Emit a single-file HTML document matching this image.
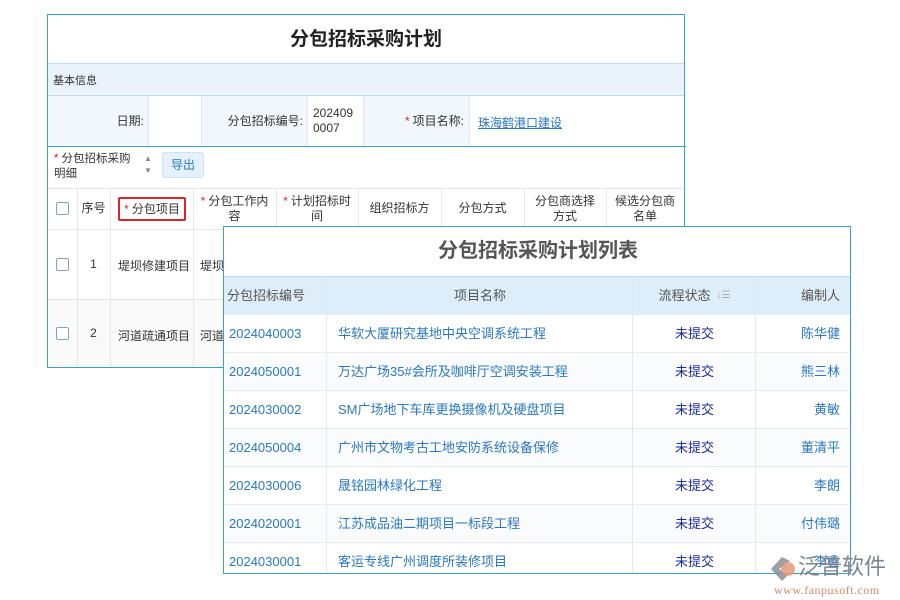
<!DOCTYPE html>
<html><head><meta charset="utf-8"><style>
*{box-sizing:border-box;margin:0;padding:0}
body{width:900px;height:600px;background:#fff;position:relative;overflow:hidden;font-family:"Liberation Sans","Noto Sans CJK SC",sans-serif;font-size:12px;color:#333}
.abs{position:absolute}
.p1{left:47px;top:14px;width:638px;height:354px;border:1px solid #3aa3c0;background:#fff}
.cell{position:absolute;display:flex;align-items:center;justify-content:center;text-align:center;line-height:15px}
.vl{position:absolute;width:1px;background:#e3e6ea}
.hl{position:absolute;height:1px;background:#e3e6ea}
.star{color:#d9262b;margin-right:3px}
.cb{width:13px;height:13px;border:1px solid #8aa2b6;border-radius:2px;background:#fff}
.p2{left:223px;top:226px;width:628px;height:348px;border:1px solid #3aa3c0;background:#fff;overflow:hidden}
.blue{color:#2a78c0}
.st{color:#1a2a9a}
</style></head><body>
<div class="abs p1">
  <div class="cell" style="left:0;top:0;width:636px;height:48px;font-size:19px;font-weight:bold;color:#222">分包招标采购计划</div>
  <div class="hl" style="left:0;top:48px;width:636px;background:#c6dbe9"></div>
  <div class="abs" style="left:0;top:49px;width:636px;height:31px;background:#eaf3fb;padding:8px 5px;font-size:11px">基本信息</div>
  <div class="hl" style="left:0;top:80px;width:636px;background:#c6dbe9"></div>
  <div class="abs" style="left:0;top:81px;width:100px;height:50px;background:#f1f7fc"></div>
  <div class="cell" style="left:0;top:81px;width:96px;height:50px;justify-content:flex-end">日期:</div>
  <div class="vl" style="left:100px;top:81px;height:50px"></div>
  <div class="vl" style="left:153px;top:81px;height:50px"></div>
  <div class="abs" style="left:154px;top:81px;width:105px;height:50px;background:#f1f7fc"></div>
  <div class="cell" style="left:154px;top:81px;width:101px;height:50px;justify-content:flex-end">分包招标编号:</div>
  <div class="vl" style="left:259px;top:81px;height:50px"></div>
  <div class="abs" style="left:265px;top:91px;line-height:15px">202409<br>0007</div>
  <div class="vl" style="left:315px;top:81px;height:50px"></div>
  <div class="abs" style="left:316px;top:81px;width:105px;height:50px;background:#f1f7fc"></div>
  <div class="cell" style="left:316px;top:81px;width:100px;height:50px;justify-content:flex-end"><span class="star">*</span>项目名称:</div>
  <div class="vl" style="left:421px;top:81px;height:50px"></div>
  <div class="abs" style="left:430px;top:99px;color:#2a78c0;text-decoration:underline">珠海鹤港口建设</div>
  <div class="hl" style="left:0;top:131px;width:638px;height:1px;background:#3aa3c0"></div>
  <div class="abs" style="left:6px;top:137px;line-height:15px;font-size:11.5px"><span class="star">*</span>分包招标采购<br>明细</div>
  <div class="abs" style="left:96px;top:138px;font-size:8px;color:#888;line-height:12px">▲<br>▼</div>
  <div class="cell" style="left:114px;top:137px;width:42px;height:26px;background:#e4f0fb;border:1px solid #cfe2f3;border-radius:3px;color:#2a78c0">导出</div>
  <div class="hl" style="left:0;top:173px;width:636px"></div>
  <div class="hl" style="left:0;top:214px;width:636px"></div>
  <div class="hl" style="left:0;top:284px;width:636px"></div>
  <div class="abs" style="left:0;top:285px;width:636px;height:67px;background:#fafafa"></div>
  <div class="vl" style="left:29px;top:173px;height:179px"></div>
  <div class="vl" style="left:62px;top:173px;height:179px"></div>
  <div class="vl" style="left:145px;top:173px;height:179px"></div>
  <div class="vl" style="left:228px;top:173px;height:41px"></div>
  <div class="vl" style="left:310px;top:173px;height:41px"></div>
  <div class="vl" style="left:393px;top:173px;height:41px"></div>
  <div class="vl" style="left:476px;top:173px;height:41px"></div>
  <div class="vl" style="left:558px;top:173px;height:41px"></div>
  <div class="cell" style="left:0;top:173px;width:29px;height:41px"><div class="cb"></div></div>
  <div class="cell" style="left:29px;top:173px;width:33px;height:41px">序号</div>
  <div class="cell" style="left:70px;top:182px;width:68px;height:24px;border:2px solid #d9262b;border-radius:2px"><span class="star">*</span>分包项目</div>
  <div class="cell" style="left:145px;top:173px;width:83px;height:41px"><span><span class="star">*</span>分包工作内<br>容</span></div>
  <div class="cell" style="left:228px;top:173px;width:82px;height:41px"><span><span class="star">*</span>计划招标时<br>间</span></div>
  <div class="cell" style="left:310px;top:173px;width:83px;height:41px">组织招标方</div>
  <div class="cell" style="left:393px;top:173px;width:83px;height:41px">分包方式</div>
  <div class="cell" style="left:476px;top:173px;width:82px;height:41px">分包商选择<br>方式</div>
  <div class="cell" style="left:558px;top:173px;width:78px;height:41px">候选分包商<br>名单</div>
  <div class="cell" style="left:0;top:214px;width:29px;height:70px"><div class="cb"></div></div>
  <div class="cell" style="left:29px;top:214px;width:33px;height:70px">1</div>
  <div class="abs" style="left:70px;top:242px">堤坝修建项目</div>
  <div class="abs" style="left:152px;top:242px">堤坝修</div>
  <div class="cell" style="left:0;top:285px;width:29px;height:67px"><div class="cb"></div></div>
  <div class="cell" style="left:29px;top:285px;width:33px;height:67px">2</div>
  <div class="abs" style="left:70px;top:312px">河道疏通项目</div>
  <div class="abs" style="left:152px;top:312px">河道疏</div>
</div>
<div class="abs p2">
  <div class="cell" style="left:0;top:0;width:628px;height:49px;font-size:20px;font-weight:bold;color:#555">分包招标采购计划列表</div>
  <div class="abs" style="left:0;top:49px;width:628px;height:38px;background:#deedfa;border-top:1px solid #b9d6ec"></div>
  <div class="cell" style="left:3px;top:49px;height:38px;font-size:13px;color:#555">分包招标编号</div>
  <div class="cell" style="left:103px;top:49px;width:306px;height:38px;font-size:13px;color:#555">项目名称</div>
  <div class="cell" style="left:409px;top:49px;width:123px;height:38px;font-size:13px;color:#555">流程状态 <span style="color:#aaa;font-size:10px;margin-left:6px">↓☰</span></div>
  <div class="cell" style="left:532px;top:49px;width:96px;height:38px;font-size:13px;color:#555;justify-content:flex-end;padding-right:12px">编制人</div>
  <div id="rows"></div>
  <div class="vl" style="left:102px;top:49px;height:300px;background:#e3e8ee"></div>
  <div class="vl" style="left:408px;top:49px;height:300px;background:#e3e8ee"></div>
  <div class="vl" style="left:531px;top:49px;height:300px;background:#e3e8ee"></div>
</div>
<script>
var d=[["2024040003","华软大厦研究基地中央空调系统工程","陈华健"],["2024050001","万达广场35#会所及咖啡厅空调安装工程","熊三林"],["2024030002","SM广场地下车库更换摄像机及硬盘项目","黄敏"],["2024050004","广州市文物考古工地安防系统设备保修","董清平"],["2024030006","晟铭园林绿化工程","李朗"],["2024020001","江苏成品油二期项目一标段工程","付伟璐"],["2024030001","客运专线广州调度所装修项目","李鑫"]];
var h="";d.forEach(function(r,i){var t=87+i*38;h+='<div class="abs" style="left:0;top:'+t+'px;width:628px;height:38px;border-top:1px solid #e6ebf0;background:'+(i%2?'#fafbfd':'#fff')+'"></div>'+
'<div class="cell blue" style="left:5px;top:'+t+'px;height:38px;font-size:13px">'+r[0]+'</div>'+
'<div class="cell blue" style="left:114px;top:'+t+'px;height:38px;font-size:13px">'+r[1]+'</div>'+
'<div class="cell st" style="left:409px;top:'+t+'px;width:123px;height:38px;font-size:13px">未提交</div>'+
'<div class="cell blue" style="left:532px;top:'+t+'px;width:96px;height:38px;font-size:13px;justify-content:flex-end;padding-right:12px">'+r[2]+'</div>';});
document.getElementById('rows').innerHTML=h;
</script>
<div class="abs" style="left:768px;top:553px;width:130px;height:45px;white-space:nowrap">
  <svg class="abs" style="left:0;top:2px" width="32" height="28" viewBox="0 0 32 28"><path d="M14 2 L3 14 L14 26 L20 20 L11 14 L22 6Z" fill="#8a8f98" opacity=".85"/><circle cx="20" cy="14" r="7" fill="#e39a7a" opacity=".85"/></svg>
  <div class="abs" style="left:30px;top:0;font-size:22px;color:#7d8590;line-height:28px;white-space:nowrap">泛普软件</div>
  <div class="abs" style="left:6px;top:30px;font-family:'Liberation Serif',serif;font-size:12px;color:#d88a6a;letter-spacing:.5px;white-space:nowrap">www.fanpusoft.com</div>
</div>
</body></html>
